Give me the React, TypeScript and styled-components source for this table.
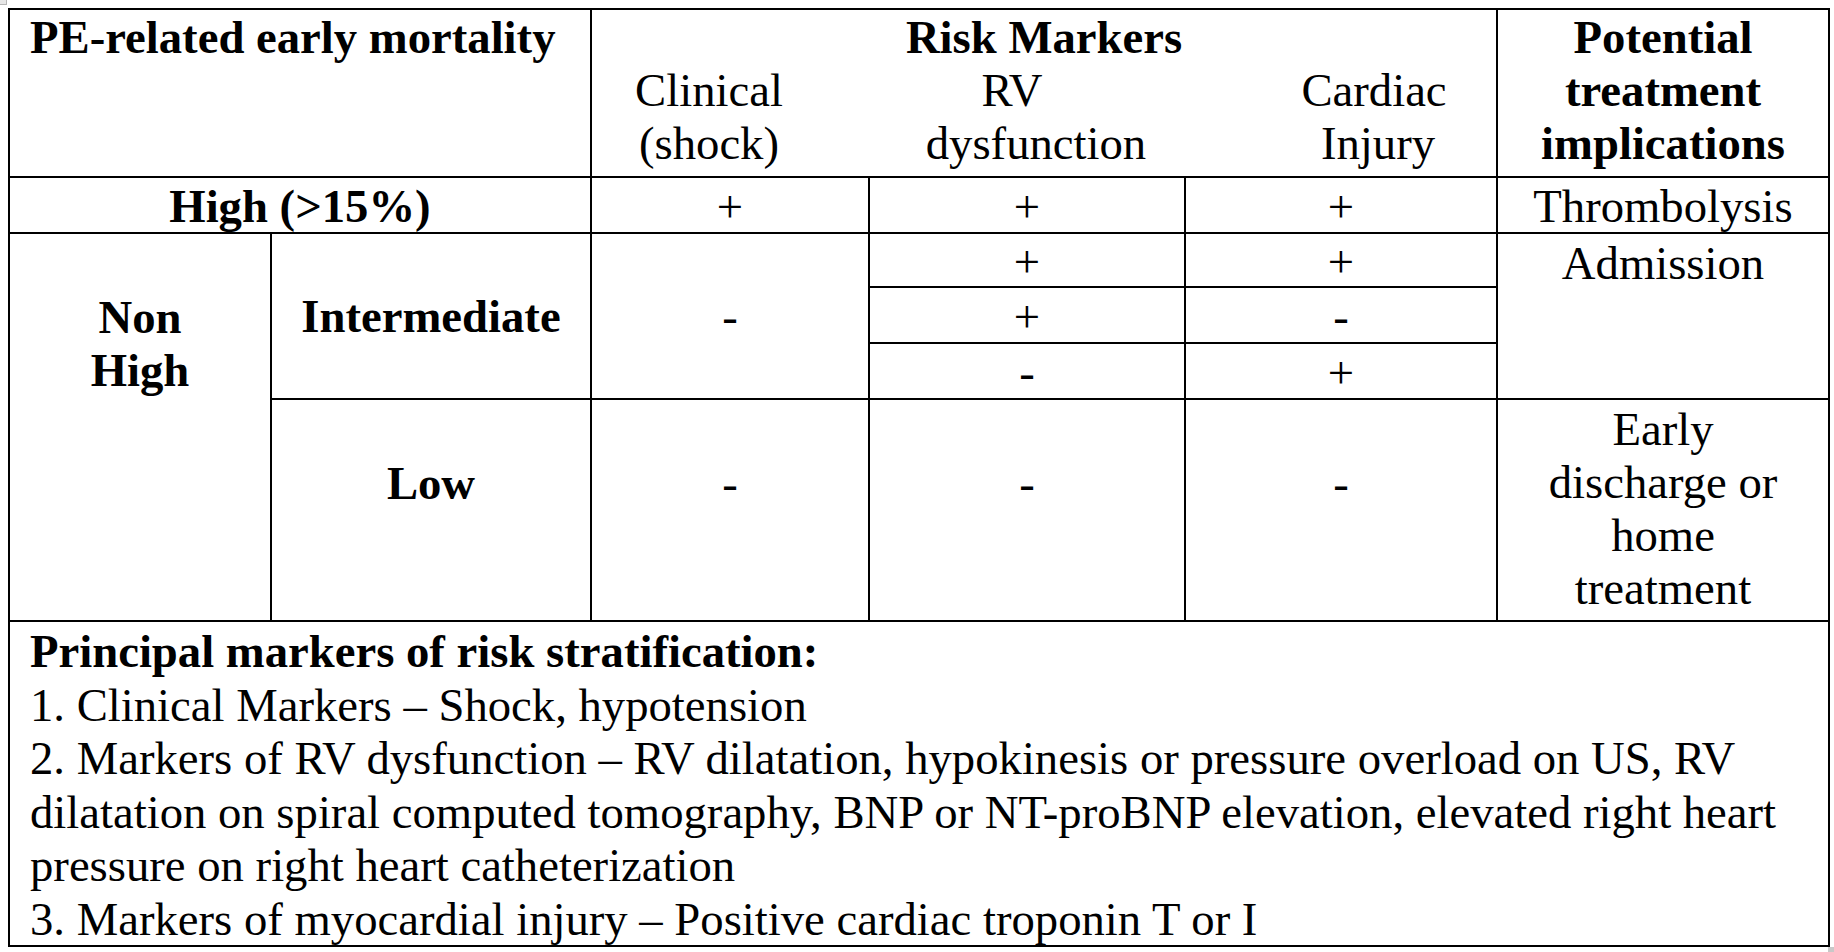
import React from 'react';
import styled, { createGlobalStyle } from 'styled-components';

const GlobalStyle = createGlobalStyle`
  html, body {
    margin: 0;
    padding: 0;
    background: #ffffff;
  }
  body {
    font-family: 'Liberation Serif', 'Times New Roman', serif;
    color: #000000;
  }
`;

const Page = styled.div`
  position: relative;
  width: 1834px;
  height: 952px;
  padding: 8px;
  box-sizing: border-box;
  overflow: hidden;
`;

// little grey crop marks left in the corners of the capture
const CornerMark = styled.span<{ $corner: 'tl' | 'br' }>`
  position: absolute;
  background: #e6e6e6;
  ${(p) =>
    p.$corner === 'tl'
      ? `top: 0; left: 0; width: 6px; height: 4px; border-right: 1px solid #b5b5b5; border-bottom: 1px solid #b5b5b5;`
      : `right: 0; bottom: 0; width: 6px; height: 5px; background: #c8c8c8;`}
`;

const Table = styled.div`
  display: grid;
  grid-template-columns: 260px 318px 276px 314px 310px 330px;
  grid-template-rows: 166px 54px 52px 54px 54px 220px 323px;
  gap: 2px;
  padding: 2px;
  background: #000000;
  width: fit-content;
  font-size: 46.7px;
  line-height: 53px;
`;

const Cell = styled.div<{
  $col: string;
  $row: string;
  $left?: boolean;
  $middle?: boolean;
  $bold?: boolean;
  $pt?: number;
}>`
  grid-column: ${(p) => p.$col};
  grid-row: ${(p) => p.$row};
  background: #ffffff;
  display: flex;
  flex-direction: column;
  justify-content: ${(p) => (p.$middle ? 'center' : 'flex-start')};
  align-items: ${(p) => (p.$left ? 'flex-start' : 'center')};
  text-align: ${(p) => (p.$left ? 'left' : 'center')};
  font-weight: ${(p) => (p.$bold ? 700 : 400)};
  padding: ${(p) => p.$pt ?? 0}px 20px 0;
  box-sizing: border-box;
  min-width: 0;
`;

const Title = styled.div`
  font-weight: 700;
`;

const SubHeads = styled.div`
  display: grid;
  grid-template-columns: 234px 420px 250px;
  align-self: stretch;
  margin: 0 -20px;
`;

const SubHead = styled.div`
  display: flex;
  flex-direction: column;
  align-items: center;
`;

const Word = styled.span<{ $shift?: number }>`
  white-space: nowrap;
  margin-left: ${(p) => (p.$shift && p.$shift > 0 ? p.$shift * 2 : 0)}px;
  margin-right: ${(p) => (p.$shift && p.$shift < 0 ? -p.$shift * 2 : 0)}px;
`;

const Notes = styled.div`
  display: flex;
  flex-direction: column;
  line-height: 53.6px;
`;

const NoteTitle = styled.div`
  font-weight: 700;
`;

const markers = [
  { col: '4', row: '3', v: '+' },
  { col: '5', row: '3', v: '+' },
  { col: '4', row: '4', v: '+' },
  { col: '5', row: '4', v: '-' },
  { col: '4', row: '5', v: '-' },
  { col: '5', row: '5', v: '+' },
];

export default function App() {
  return (
    <Page>
      <GlobalStyle />
      <CornerMark $corner="tl" />
      <CornerMark $corner="br" />
      <Table>
        <Cell $col="1 / 3" $row="1" $left $bold $pt={1}>
          PE-related early mortality
        </Cell>
        <Cell $col="3 / 6" $row="1" $pt={1}>
          <Title>Risk Markers</Title>
          <SubHeads>
            <SubHead>
              <Word>Clinical</Word>
              <Word>(shock)</Word>
            </SubHead>
            <SubHead>
              <Word $shift={-24}>RV</Word>
              <Word>dysfunction</Word>
            </SubHead>
            <SubHead>
              <Word $shift={3}>Cardiac</Word>
              <Word $shift={7}>Injury</Word>
            </SubHead>
          </SubHeads>
        </Cell>
        <Cell $col="6" $row="1" $bold $pt={1}>
          Potential
          <br />
          treatment
          <br />
          implications
        </Cell>

        <Cell $col="1 / 3" $row="2" $bold $pt={2}>
          High (&gt;15%)
        </Cell>
        <Cell $col="3" $row="2" $pt={2}>+</Cell>
        <Cell $col="4" $row="2" $pt={2}>+</Cell>
        <Cell $col="5" $row="2" $pt={2}>+</Cell>
        <Cell $col="6" $row="2" $pt={2}>Thrombolysis</Cell>

        <Cell $col="1" $row="3 / 7" $bold $pt={57}>
          Non
          <br />
          High
        </Cell>
        <Cell $col="2" $row="3 / 6" $bold $middle>
          Intermediate
        </Cell>
        <Cell $col="3" $row="3 / 6" $middle>-</Cell>
        {markers.map((m) => (
          <Cell key={m.col + m.row} $col={m.col} $row={m.row} $middle $pt={3}>
            {m.v}
          </Cell>
        ))}
        <Cell $col="6" $row="3 / 6" $pt={3}>Admission</Cell>

        <Cell $col="2" $row="6" $bold $pt={57}>Low</Cell>
        <Cell $col="3" $row="6" $pt={57}>-</Cell>
        <Cell $col="4" $row="6" $pt={57}>-</Cell>
        <Cell $col="5" $row="6" $pt={57}>-</Cell>
        <Cell $col="6" $row="6" $pt={3}>
          Early
          <br />
          discharge or
          <br />
          home
          <br />
          treatment
        </Cell>

        <Cell $col="1 / 7" $row="7" $left $pt={3}>
          <Notes>
            <NoteTitle>Principal markers of risk stratification:</NoteTitle>
            <div>1. Clinical Markers – Shock, hypotension</div>
            <div>
              2. Markers of RV dysfunction – RV dilatation, hypokinesis or pressure overload on US, RV
              dilatation on spiral computed tomography, BNP or NT-proBNP elevation, elevated right heart
              pressure on right heart catheterization
            </div>
            <div>3. Markers of myocardial injury – Positive cardiac troponin T or I</div>
          </Notes>
        </Cell>
      </Table>
    </Page>
  );
}
